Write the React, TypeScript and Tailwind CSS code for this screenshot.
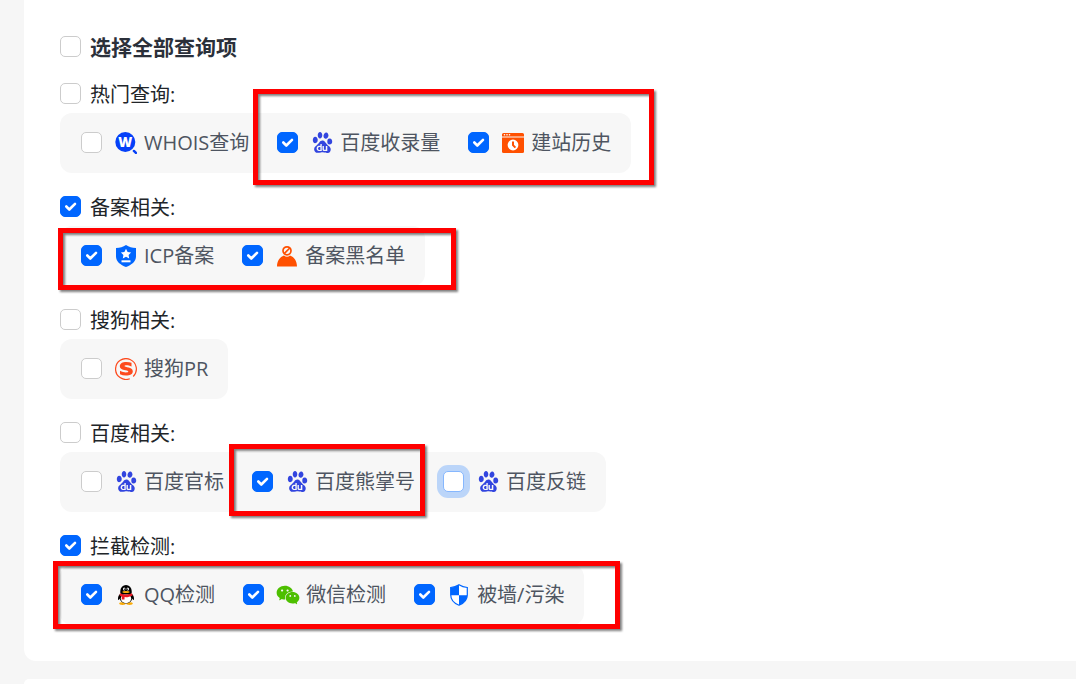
import { useState, type ReactNode } from "react";
import { SiBaidu } from "react-icons/si";
import { AiFillWechat } from "react-icons/ai";

function WhoisIcon() {
  return (
    <svg viewBox="0 0 22 22" className="size-[22px]">
      <circle cx="10.300" cy="10" r="10" fill="#0540f8" />
      <path d="M18.900 18.900l2 2" stroke="#0540f8" strokeWidth="2.400" strokeLinecap="round" />
      <text x="10.300" y="15" textAnchor="middle" fontSize="13.500" fontWeight="800" fill="#fff" fontFamily="Open Sans">
        W
      </text>
    </svg>
  );
}

function HistoryIcon() {
  return (
    <svg viewBox="0 0 22 22" className="size-[22px]">
      <path d="M1.500 1h19A1.500 1.500 0 0 1 22 2.500V4.500H0V2.500A1.500 1.500 0 0 1 1.500 1z" fill="#ff5000" />
      <path d="M0 5.500h22v14a1.500 1.500 0 0 1-1.500 1.500h-19A1.500 1.500 0 0 1 0 19.500z" fill="#ff5000" />
      <circle cx="2.500" cy="2.800" r=".8" fill="#fff" />
      <circle cx="5" cy="2.800" r=".8" fill="#fff" />
      <circle cx="7.500" cy="2.800" r=".8" fill="#fff" />
      <circle cx="11" cy="13" r="5.400" fill="#fff" />
      <path d="M11 9.500v3.700l2.400 2.400" stroke="#ff5000" strokeWidth="2" fill="none" />
    </svg>
  );
}

function IcpIcon() {
  return (
    <svg viewBox="0 0 22 22" className="size-[22px]">
      <path d="M11 0c3 2 6 2.800 10 3v8.500c0 5-4.500 8.500-10 10.500C5.500 20 1 16.500 1 11.500V3c4-.2 7-1 10-3z" fill="#0066ff" />
      <path d="M11 3.800l1.600 3.200 3.500.5-2.500 2.500.6 3.500-3.200-1.700-3.200 1.700.6-3.500L5.900 7.500l3.500-.5z" fill="#fff" />
      <path d="M6.500 16.300h9" stroke="#fff" strokeWidth="2" />
    </svg>
  );
}

function BlacklistIcon() {
  return (
    <svg viewBox="0 0 22 22" className="size-[22px]">
      <path d="M1 21.500c0-5.500 2.800-9.500 7-11 .9.900 1.900 1.300 3 1.300s2.100-.4 3-1.300c4.200 1.500 7 5.500 7 11z" fill="#ff5000" />
      <circle cx="11" cy="5.800" r="4" fill="none" stroke="#ff5000" strokeWidth="1.700" />
      <path d="M8.200 8.600l5.600-5.600" stroke="#ff5000" strokeWidth="1.700" />
    </svg>
  );
}

function SogouIcon() {
  return (
    <svg viewBox="0 0 22 22" className="size-[22px]">
      <path d="M14.800 20.700a10.400 10.400 0 1 1 3.400-2.200" fill="none" stroke="#fd4a1e" strokeWidth="1.200" />
      <path
        d="M16.500 4.800v3.600c-1.700-.9-3.500-1.200-5-1.200-1.300 0-2 .2-2 .8 0 1.700 8.300.5 8.300 5.200 0 2.900-2.800 4.300-6.800 4.300-2.300 0-4.300-.4-6-1.200v-3.600c2 1.200 4.200 1.700 6 1.700 1.500 0 2.300-.3 2.300-.9 0-1.800-8.500-.5-8.500-5.200 0-2.700 2.700-4.200 6.500-4.200 1.900 0 3.700.2 5.200.7z"
        fill="#fd4a1e"
      />
    </svg>
  );
}

function QQIcon() {
  return (
    <svg viewBox="0 0 22 22" className="size-[22px]">
      <ellipse cx="7.500" cy="19.600" rx="3.300" ry="1.300" fill="#faab07" />
      <ellipse cx="14.500" cy="19.600" rx="3.300" ry="1.300" fill="#faab07" />
      <path d="M5 10c-1.700 1.700-2.300 4-1.900 5.700.5.700 1.500-.4 2.200-1.700h11.400c.7 1.300 1.700 2.400 2.200 1.700.4-1.700-.2-4-1.900-5.700z" fill="#000" />
      <ellipse cx="11" cy="13.800" rx="6.300" ry="5.700" fill="#000" />
      <ellipse cx="11" cy="14.500" rx="5.200" ry="4.700" fill="#fff" />
      <path d="M5.300 9V7a5.700 5.900 0 0 1 11.400 0v2c0 2-11.400 2-11.400 0z" fill="#000" />
      <ellipse cx="9.200" cy="5" rx="1.200" ry="1.600" fill="#fff" />
      <ellipse cx="12.800" cy="5" rx="1.200" ry="1.600" fill="#fff" />
      <circle cx="9.500" cy="5.200" r=".6" fill="#000" />
      <circle cx="12.500" cy="5.200" r=".6" fill="#000" />
      <ellipse cx="11" cy="7.900" rx="3.600" ry="1" fill="#faab07" />
      <path d="M5 9.300c3.500 1.700 8.500 1.700 12 0l.6 2.100c-3 1.600-5.600 1.900-8 1.700l-.1 2.300H6.700l.2-3-2.300-.9z" fill="#eb1923" />
    </svg>
  );
}

function ShieldIcon() {
  return (
    <svg viewBox="0 0 22 22" className="size-[22px]">
      <path d="M11 .8c2.600 1.700 5.200 2.500 8.300 2.700v7.200c0 5-3.300 8.500-8.300 10.500-5-2-8.300-5.500-8.300-10.500V3.500C5.800 3.300 8.400 2.500 11 .8z" fill="#fff" stroke="#0066ff" strokeWidth="1.200" />
      <path d="M11 .8v10.400H2.700V3.500C5.800 3.300 8.400 2.500 11 .8zM11 11.200h8.300c-.2 4.800-3.500 8-8.300 10z" fill="#0066ff" />
    </svg>
  );
}

const baidu = <SiBaidu className="size-[21px] text-[#3245df]" />;

type Item = { label: string; icon: ReactNode; checked?: boolean; focused?: boolean };
type Group = { title: string; checked?: boolean; items: Item[]; mark?: string };

const groups: Group[] = [
  {
    title: "热门查询:",
    mark: "-top-6 left-[193px] h-24 w-[401px]",
    items: [
      { label: "WHOIS查询", icon: <WhoisIcon /> },
      { label: "百度收录量", icon: baidu, checked: true },
      { label: "建站历史", icon: <HistoryIcon />, checked: true },
    ],
  },
  {
    title: "备案相关:",
    checked: true,
    mark: "top-0.5 -left-0.5 h-[62px] w-[398px]",
    items: [
      { label: "ICP备案", icon: <IcpIcon />, checked: true },
      { label: "备案黑名单", icon: <BlacklistIcon />, checked: true },
    ],
  },
  {
    title: "搜狗相关:",
    items: [{ label: "搜狗PR", icon: <SogouIcon /> }],
  },
  {
    title: "百度相关:",
    mark: "-top-2 left-[169px] h-[72px] w-[196px]",
    items: [
      { label: "百度官标", icon: baidu },
      { label: "百度熊掌号", icon: baidu, checked: true },
      { label: "百度反链", icon: baidu, focused: true },
    ],
  },
  {
    title: "拦截检测:",
    checked: true,
    mark: "-top-1 -left-[7px] h-[68px] w-[567px]",
    items: [
      { label: "QQ检测", icon: <QQIcon />, checked: true },
      { label: "微信检测", icon: <AiFillWechat className="size-[26px] shrink-0 text-[#4dbf00]" />, checked: true },
      { label: "被墙/污染", icon: <ShieldIcon />, checked: true },
    ],
  },
];

function Checkbox({ checked = false, focused = false }: { checked?: boolean; focused?: boolean }) {
  const [on, setOn] = useState(checked);
  return (
    <span className="grid size-[21px] shrink-0 place-items-center">
      <input
        type="checkbox"
        checked={on}
        onChange={(e) => setOn(e.target.checked)}
        className={`peer col-start-1 row-start-1 size-[21px] appearance-none rounded-[5px] border bg-white outline-none checked:border-[#0066ff] checked:bg-[#0066ff] ${
          focused ? "border-[#86b7fe] ring-6 ring-[#bbd5f9]" : "border-[#cccccc]"
        }`}
      />
      <svg viewBox="0 0 21 21" className="pointer-events-none invisible col-start-1 row-start-1 size-[21px] peer-checked:visible">
        <path d="M6.300 10.500l3 3 5.700-5.700" fill="none" stroke="#fff" strokeWidth="2.600" strokeLinecap="round" strokeLinejoin="round" />
      </svg>
    </span>
  );
}

export default function App() {
  return (
    <div className="min-h-screen space-y-[18px] bg-[#f6f6f6] pl-6 font-['Open_Sans','Noto_Sans_CJK_SC',sans-serif]">
      <main className="rounded-bl-xl bg-white px-9 pt-9 pb-9">
        <h1 className="mb-[26px]">
          <label className="flex h-[21px] w-fit items-center gap-[9px] text-[21px] leading-[21px] font-bold text-[#2b303a]">
            <Checkbox />
            <span className="pt-0.5">选择全部查询项</span>
          </label>
        </h1>

        <div className="space-y-[23px]">
          {groups.map((group) => (
            <section key={group.title}>
              <label className="flex h-[21px] w-fit items-center gap-[9px] text-[20px] leading-[21px] text-[#212529]">
                <Checkbox checked={group.checked} />
                <span className="pt-0.5">{group.title}</span>
              </label>

              <div className="relative mt-[9px] flex h-[60px] w-fit items-center gap-7 rounded-xl bg-[#f7f7f7] pr-5 pb-px pl-[21px]">
                {group.items.map((item) => (
                  <label key={item.label} className="flex items-center text-[20px] leading-[21px] whitespace-nowrap text-[#4e5561]">
                    <Checkbox checked={item.checked} focused={item.focused} />
                    <span className="mr-[7px] ml-[13px] flex w-[22px] justify-center">{item.icon}</span>
                    {item.label}
                  </label>
                ))}

                {/* Red highlight frame */}
                {group.mark && (
                  <div className={`pointer-events-none absolute border-5 border-[#ff0000] drop-shadow-[2px_2px_1px_rgba(0,0,0,0.5)] ${group.mark}`} />
                )}
              </div>
            </section>
          ))}
        </div>
      </main>

      <section className="h-[5px] rounded-tl-xl bg-white" />
    </div>
  );
}
